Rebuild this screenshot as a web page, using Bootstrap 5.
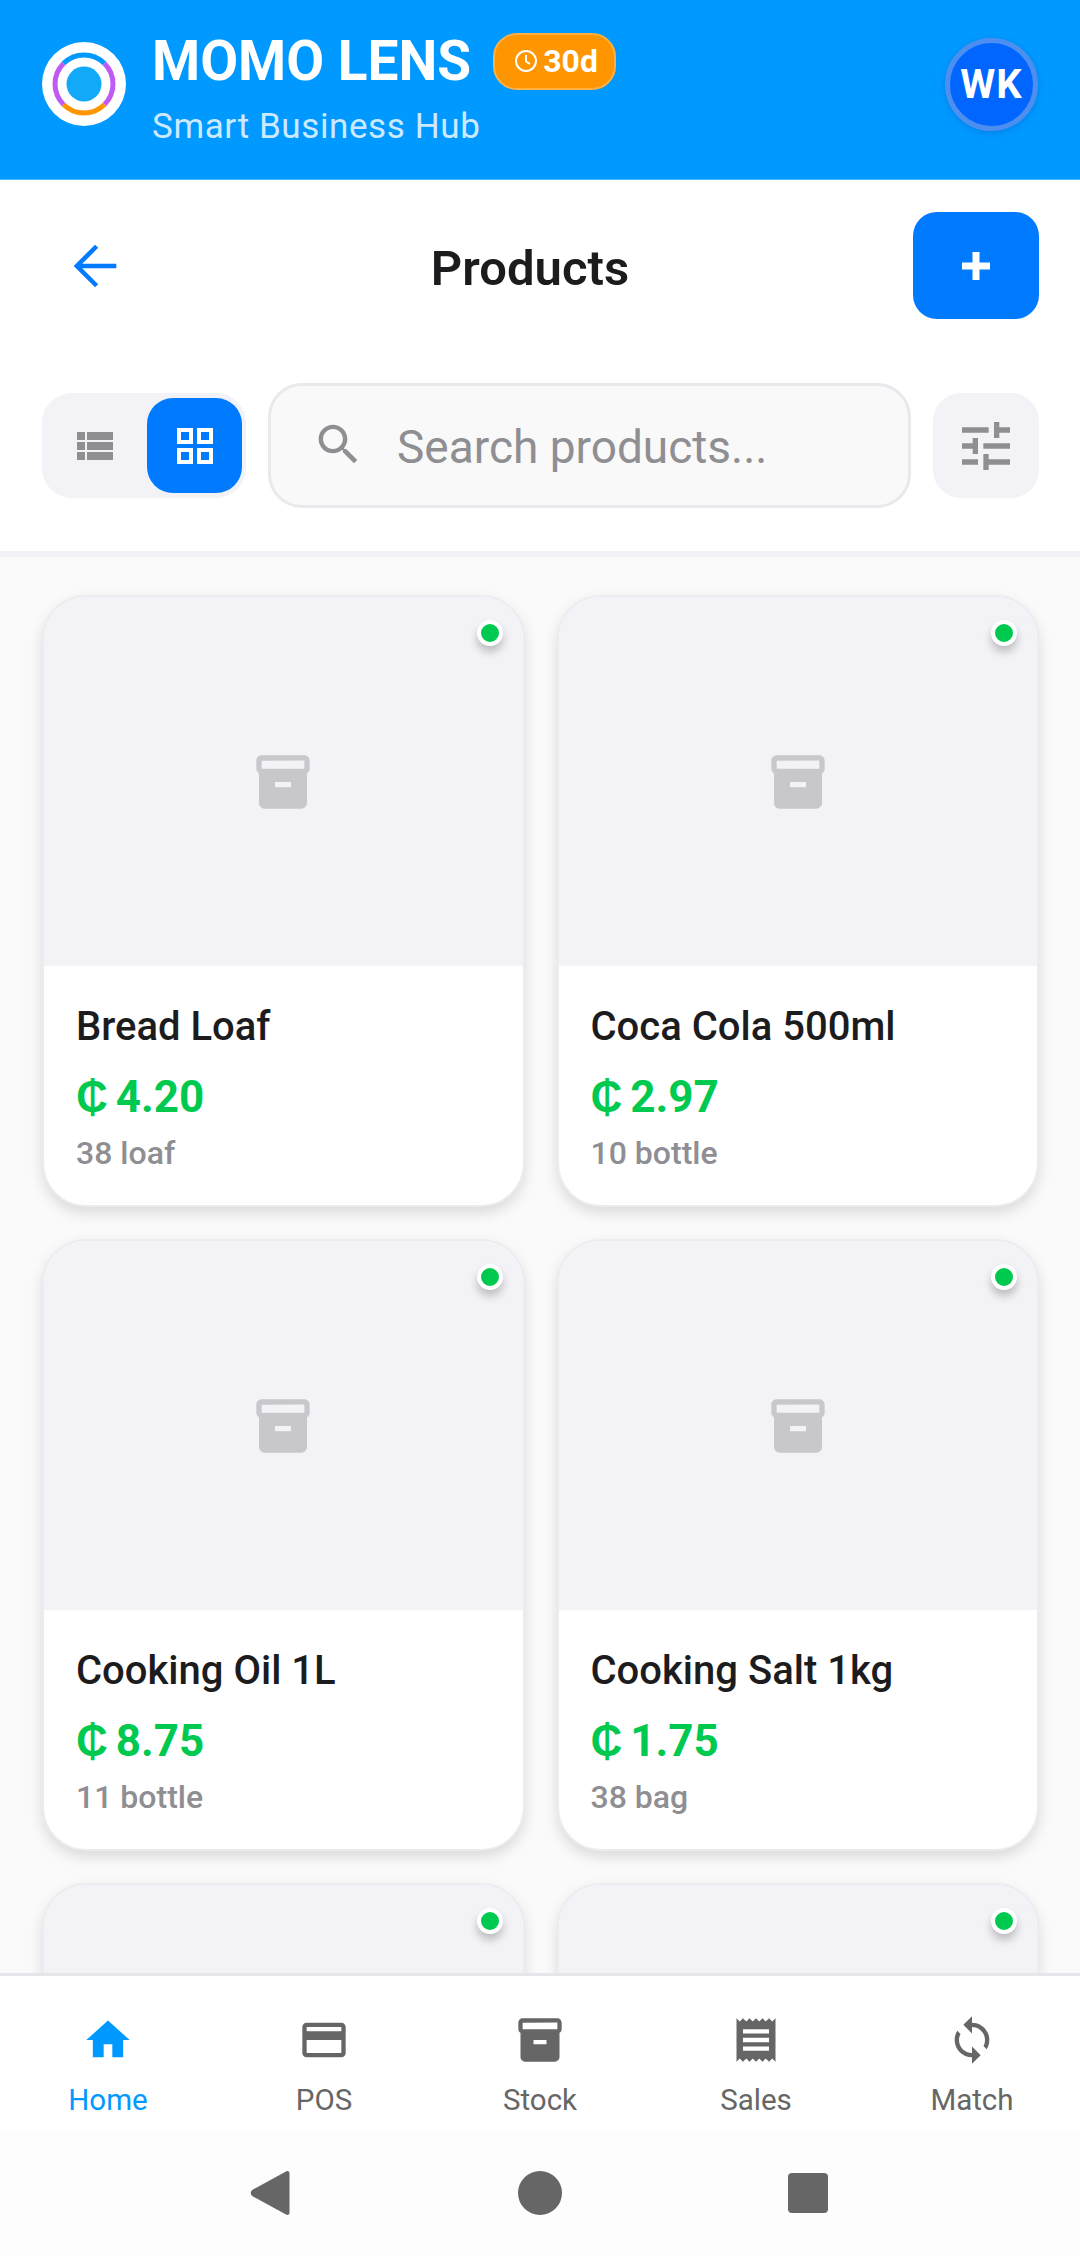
<!DOCTYPE html>
<html lang="en">
<head>
    <meta charset="UTF-8" />
    <title>Momo Lens - Products</title>
    <meta name="viewport" content="width=device-width, initial-scale=1.0" />
    <link href="https://cdn.jsdelivr.net/npm/bootstrap@5.3.0/dist/css/bootstrap.min.css" rel="stylesheet">
    <style>
        html, body { height: 2256px; }
        body {
            font-family: Roboto, "Liberation Sans", sans-serif;
            background: #fff;
            color: #1c1c1e;
            overflow: hidden;
        }
        .app-shell { height: 2256px; }

        .app-header {
            height: 180px;
            padding: 32px 42px 0;
            background: #0099ff;
            border-bottom: 1px solid #4db8ff;
        }
        .brand-logo { width: 84px; height: 84px; margin-top: 10px; margin-right: 26px; }
        .brand-title { font-size: 55px; line-height: 58px; font-weight: 700; color: #fff; }
        .brand-sub { font-size: 35px; line-height: 42px; margin-top: 16px; color: #cce9ff; letter-spacing: .6px; }
        .trial-pill {
            height: 57px;
            margin-left: 22px;
            padding: 0 16px 0 19px;
            background: #ff9500;
            border: 2px solid #ffb040;
            border-radius: 24px;
            color: #fff;
            font-size: 32px;
            font-weight: 700;
        }
        .trial-pill svg { width: 24px; height: 24px; margin-right: 5px; }
        .user-avatar {
            width: 93px;
            height: 93px;
            margin-top: 6px;
            background: #0066ff;
            border: 5px solid #4d8ff0;
            border-radius: 50%;
            color: #fff;
            font-size: 40px;
            font-weight: 700;
            letter-spacing: 1px;
            box-shadow: 0 2px 6px rgba(0, 60, 160, .25);
        }

        .page-top { padding: 32px 41px 43px 42px; border-bottom: 6px solid #f2f2f7; }
        .back-link { width: 105px; height: 107px; color: #007aff; }
        .back-link svg { width: 64px; height: 64px; }
        .page-title { font-size: 49px; font-weight: 600; margin: 8px 0 0; }
        .add-btn {
            width: 126px;
            height: 107px;
            background: #007aff;
            border: 0;
            border-radius: 24px;
        }
        .add-btn svg { width: 30px; height: 30px; }

        .tool-row { margin-top: 64px; gap: 22px; }
        .view-toggle {
            width: 204px;
            height: 105px;
            padding: 5px 4px 5px 5px;
            background: #f2f2f7;
            border-radius: 30px;
        }
        .view-opt { width: 95px; height: 95px; border-radius: 26px; color: #8e8e93; }
        .view-opt.is-on { background: #007aff; color: #fff; }
        .view-opt svg { width: 48px; height: 48px; }
        .search-box {
            height: 125px;
            padding: 0 30px 0 46px;
            background: #f9f9f9;
            border: 3px solid #e9e9ed;
            border-radius: 34px;
        }
        .search-box svg { width: 53px; height: 53px; color: #8e8e93; margin-left: -5px; margin-right: 32px; margin-bottom: 3px; flex: none; }
        .search-box input {
            padding: 3px 0 0;
            border: 0;
            background: transparent;
            box-shadow: none;
            font-size: 46px;
            color: #1c1c1e;
        }
        .search-box input::placeholder { color: #8e8e93; opacity: 1; }
        .filter-btn { width: 106px; height: 105px; background: #f2f2f7; border-radius: 28px; color: #8e8e93; }
        .filter-btn svg { width: 64px; height: 64px; }

        .product-area { background: #fafafa; padding: 38px 41px 0 42px; overflow: hidden; min-height: 0; }
        .product-grid { --bs-gutter-x: 32px; --bs-gutter-y: 32px; }
        .product-card {
            height: 612px;
            background: #fff;
            border: 2px solid #ececf0;
            border-radius: 44px;
            box-shadow: 0 6px 14px rgba(0, 0, 0, .13);
            overflow: hidden;
        }
        .product-thumb { height: 369px; background: #f2f2f7; color: #c7c7cc; }
        .product-thumb svg { width: 64px; height: 64px; }
        .stock-dot {
            top: 23px;
            right: 20px;
            width: 26px;
            height: 26px;
            background: #00c94f;
            border: 4px solid #fff;
            border-radius: 50%;
            box-shadow: 0 6px 8px rgba(0, 0, 0, .22);
        }
        .product-info { padding: 37px 32px 0; }
        .product-name { font-size: 40px; line-height: 48px; font-weight: 500; color: #1c1c1e; }
        .product-price { font-size: 44px; line-height: 54px; margin-top: 19px; font-weight: 700; color: #00c94f; word-spacing: -3px; }
        .product-qty { font-size: 32px; line-height: 38px; margin-top: 10px; font-weight: 500; color: #8e8e93; }

        .tab-bar { height: 157px; background: #fff; border-top: 3px solid #e5e5ea; }
        .tab-item { width: 20%; padding-top: 38px; color: #666; text-decoration: none; font-size: 29.5px; line-height: 34px; font-weight: 400; }
        .tab-item svg { width: 52px; height: 52px; margin-bottom: 17px; }
        .tab-item.is-on { color: #0099ff; }

        .system-bar { height: 126px; background: #fdfdfd; color: #666; }
        .sys-slot { width: 268px; }
        .sys-slot svg { width: 48px; height: 48px; }
    </style>
</head>
<body>

<div class="app-shell d-flex flex-column">

    <!-- Brand header -->
    <header class="app-header d-flex justify-content-between align-items-start flex-shrink-0">
        <div class="d-flex align-items-start">
            <svg class="brand-logo" viewBox="0 0 84 84">
                <circle cx="42" cy="42" r="42" fill="#fff"/>
                <g fill="none" stroke-width="5">
                    <path d="M21.5 21.5A29 29 0 0 1 62.5 21.5" stroke="#0099ff"/>
                    <path d="M62.5 21.5A29 29 0 0 1 62.5 62.5" stroke="#bf5af2"/>
                    <path d="M62.5 62.5A29 29 0 0 1 21.5 62.5" stroke="#ff9500"/>
                    <path d="M21.5 62.5A29 29 0 0 1 21.5 21.5" stroke="#bf5af2"/>
                </g>
                <circle cx="42" cy="42" r="17.5" fill="#12aaf8"/>
            </svg>
            <div>
                <div class="d-flex align-items-center">
                    <span class="brand-title">MOMO LENS</span>
                    <span class="trial-pill d-inline-flex align-items-center">
                        <svg viewBox="0 0 24 24" fill="none" stroke="currentColor" stroke-width="2"><circle cx="12" cy="12" r="10"/><path d="M12 6v6.5l4 2.5"/></svg>30d
                    </span>
                </div>
                <div class="brand-sub">Smart Business Hub</div>
            </div>
        </div>
        <div class="user-avatar d-flex align-items-center justify-content-center">WK</div>
    </header>

    <!-- Title and filters -->
    <section class="page-top flex-shrink-0">
        <div class="d-flex justify-content-between align-items-center">
            <a class="back-link d-flex align-items-center justify-content-center" href="#">
                <svg viewBox="0 0 24 24" fill="none" stroke="currentColor" stroke-width="1.7"><path d="M20 12H5.200M12.600 4.600 5.200 12l7.400 7.400"/></svg>
            </a>
            <h1 class="page-title">Products</h1>
            <button class="add-btn btn d-flex align-items-center justify-content-center" type="button">
                <svg viewBox="0 0 30 30" fill="none" stroke="#fff" stroke-width="7"><path d="M15 1v28M1 15h28"/></svg>
            </button>
        </div>
        <div class="tool-row d-flex align-items-center">
            <div class="view-toggle d-flex flex-shrink-0 justify-content-between">
                <div class="view-opt d-flex align-items-center justify-content-center">
                    <svg viewBox="0 0 24 24" fill="currentColor"><path d="M3 14h4v-4H3v4zm0 5h4v-4H3v4zM3 9h4V5H3v4zm5 5h13v-4H8v4zm0 5h13v-4H8v4zM8 5v4h13V5H8z"/></svg>
                </div>
                <div class="view-opt is-on d-flex align-items-center justify-content-center">
                    <svg viewBox="0 0 24 24" fill="currentColor"><path d="M3 3v8h8V3H3zm6 6H5V5h4v4zm-6 4v8h8v-8H3zm6 6H5v-4h4v4zm4-16v8h8V3h-8zm6 6h-4V5h4v4zm-6 4v8h8v-8h-8zm6 6h-4v-4h4v4z"/></svg>
                </div>
            </div>
            <div class="search-box d-flex align-items-center flex-grow-1">
                <svg viewBox="0 0 24 24" fill="currentColor"><path d="M15.5 14h-.79l-.28-.27C15.41 12.59 16 11.11 16 9.5 16 5.91 13.09 3 9.5 3S3 5.91 3 9.5 5.91 16 9.5 16c1.61 0 3.09-.59 4.23-1.57l.27.28v.79l5 4.99L20.49 19l-4.99-5zm-6 0C7.01 14 5 11.99 5 9.5S7.01 5 9.5 5 14 7.01 14 9.5 11.99 14 9.5 14z"/></svg>
                <input class="form-control" type="text" placeholder="Search products...">
            </div>
            <div class="filter-btn d-flex align-items-center justify-content-center flex-shrink-0">
                <svg viewBox="0 0 24 24" fill="currentColor"><path d="M3 17v2h6v-2H3zM3 5v2h10V5H3zm10 16v-2h8v-2h-8v-2h-2v6h2zM7 9v2H3v2h4v2h2V9H7zm14 4v-2H11v2h10zm-6-4h2V7h4V5h-4V3h-2v6z"/></svg>
            </div>
        </div>
    </section>

    <!-- Products -->
    <main class="product-area flex-grow-1">
        <div class="row row-cols-2 product-grid" id="products"></div>
    </main>

    <!-- Tabs -->
    <nav class="tab-bar d-flex flex-shrink-0">
        <a class="tab-item is-on d-flex flex-column align-items-center" href="#">
            <svg viewBox="0 0 24 24" fill="currentColor"><path d="M10 20v-6h4v6h5v-8h3L12 3 2 12h3v8z"/></svg>Home
        </a>
        <a class="tab-item d-flex flex-column align-items-center" href="#">
            <svg viewBox="0 0 24 24" fill="currentColor"><path d="M20 4H4c-1.11 0-1.99.89-1.99 2L2 18c0 1.11.89 2 2 2h16c1.11 0 2-.89 2-2V6c0-1.11-.89-2-2-2zm0 14H4v-6h16v6zm0-10H4V6h16v2z"/></svg>POS
        </a>
        <a class="tab-item d-flex flex-column align-items-center" href="#">
            <svg viewBox="0 0 24 24" fill="currentColor"><path d="M20 2H4c-1 0-2 .9-2 2v3.01c0 .72.43 1.34 1 1.69V20c0 1.1 1.1 2 2 2h14c.9 0 2-.9 2-2V8.7c.57-.35 1-.97 1-1.69V4c0-1.1-1-2-2-2zm-5 12H9v-2h6v2zm5-7H4V4l16-.02V7z"/></svg>Stock
        </a>
        <a class="tab-item d-flex flex-column align-items-center" href="#">
            <svg viewBox="0 0 24 24" fill="currentColor"><path d="M18 17H6v-2h12v2zm0-4H6v-2h12v2zm0-4H6V7h12v2zM3 22l1.5-1.5L6 22l1.5-1.5L9 22l1.5-1.5L12 22l1.5-1.5L15 22l1.5-1.5L18 22l1.5-1.5L21 22V2l-1.5 1.5L18 2l-1.5 1.5L15 2l-1.5 1.5L12 2l-1.5 1.5L9 2 7.5 3.5 6 2 4.5 3.5 3 2v20z"/></svg>Sales
        </a>
        <a class="tab-item d-flex flex-column align-items-center" href="#">
            <svg viewBox="0 0 24 24" fill="currentColor"><path d="M12 4V1L8 5l4 4V6c3.31 0 6 2.69 6 6 0 1.01-.25 1.97-.7 2.8l1.46 1.46C19.54 15.03 20 13.57 20 12c0-4.42-3.58-8-8-8zm0 14c-3.31 0-6-2.69-6-6 0-1.01.25-1.97.7-2.8L5.24 7.74C4.46 8.97 4 10.43 4 12c0 4.42 3.58 8 8 8v3l4-4-4-4v3z"/></svg>Match
        </a>
    </nav>

    <!-- Android nav buttons -->
    <div class="system-bar d-flex justify-content-center align-items-center flex-shrink-0">
        <div class="sys-slot d-flex justify-content-center">
            <svg viewBox="0 0 48 48" fill="currentColor"><path d="M5 20.500 38 2.500c2-1 3.500 0 3.500 2v39c0 2-1.500 3-3.500 2L5 27.500c-3-1.700-3-5.300 0-7z"/></svg>
        </div>
        <div class="sys-slot d-flex justify-content-center">
            <svg viewBox="0 0 48 48" fill="currentColor"><circle cx="24" cy="24" r="22"/></svg>
        </div>
        <div class="sys-slot d-flex justify-content-center">
            <svg viewBox="0 0 48 48" fill="currentColor"><rect x="4" y="4" width="40" height="40" rx="4"/></svg>
        </div>
    </div>
</div>

<script src="https://cdn.jsdelivr.net/npm/bootstrap@5.3.0/dist/js/bootstrap.bundle.min.js"></script>
<script>
    // last two are cut off by the tab bar, only the image part shows
    const products = [
        { name: "Bread Loaf", price: "4.20", qty: "38 loaf" },
        { name: "Coca Cola 500ml", price: "2.97", qty: "10 bottle" },
        { name: "Cooking Oil 1L", price: "8.75", qty: "11 bottle" },
        { name: "Cooking Salt 1kg", price: "1.75", qty: "38 bag" },
        {},
        {}
    ];

    const boxIcon = '<svg viewBox="0 0 24 24" fill="currentColor"><path d="M20 2H4c-1 0-2 .9-2 2v3.01c0 .72.43 1.34 1 1.69V20c0 1.1 1.1 2 2 2h14c.9 0 2-.9 2-2V8.7c.57-.35 1-.97 1-1.69V4c0-1.1-1-2-2-2zm-5 12H9v-2h6v2zm5-7H4V4l16-.02V7z"/></svg>';

    document.getElementById("products").innerHTML = products.map(p => `
        <div class="col">
            <div class="product-card">
                <div class="product-thumb position-relative d-flex align-items-center justify-content-center">
                    ${boxIcon}
                    <span class="stock-dot position-absolute"></span>
                </div>
                ${p.name ? `<div class="product-info">
                    <div class="product-name">${p.name}</div>
                    <div class="product-price">₵ ${p.price}</div>
                    <div class="product-qty">${p.qty}</div>
                </div>` : ""}
            </div>
        </div>`).join("");
</script>

</body>
</html>
